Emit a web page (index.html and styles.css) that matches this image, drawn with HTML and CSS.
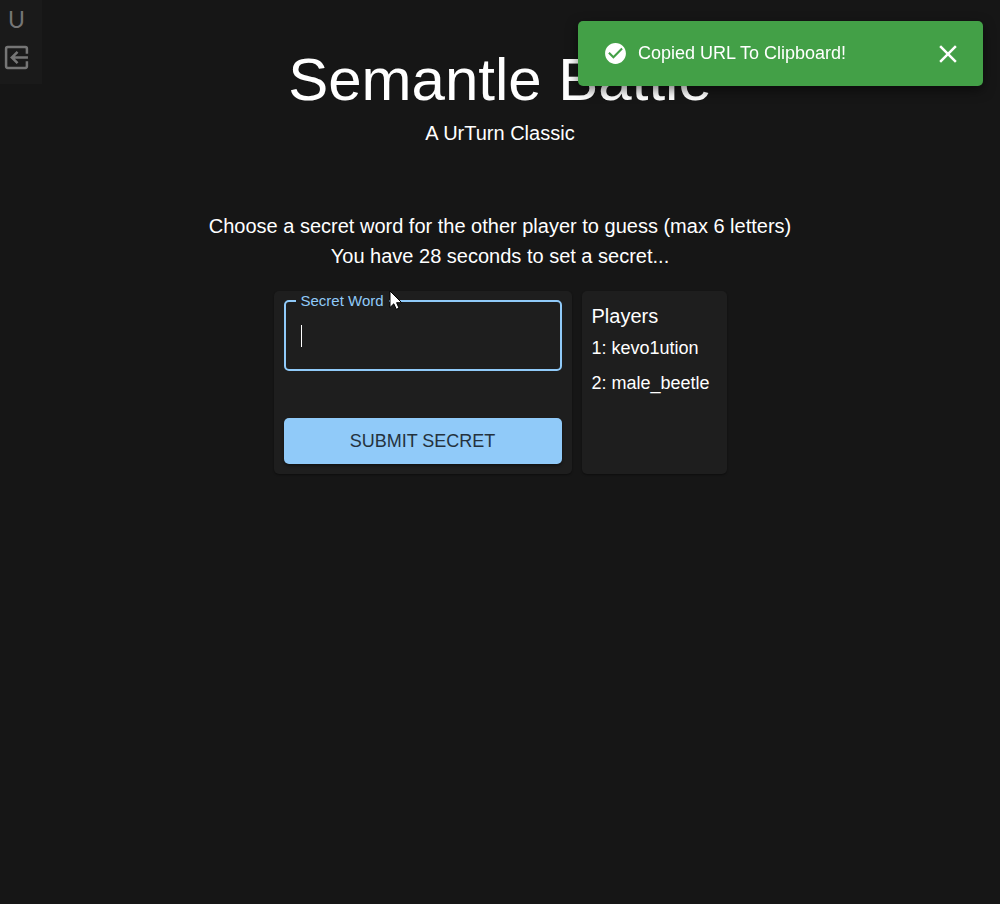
FILE: index.html
```html
<!DOCTYPE html>
<html lang="en">
<head>
<meta charset="utf-8">
<meta name="viewport" content="width=device-width, initial-scale=1">
<title>Semantle Battle</title>
<link rel="stylesheet" href="styles.css">
</head>
<body>
<nav class="rail" aria-label="Game">
  <a class="rail-logo" href="#" aria-label="UrTurn home">U</a>
  <button class="rail-button" type="button" aria-label="Leave match">
    <svg class="rail-icon" viewBox="0 0 24 24" fill="none" stroke="currentColor" stroke-width="2.400" stroke-linejoin="round">
      <path d="M22 8.500V3.500A1.500 1.500 0 0 0 20.500 2H3.500A1.500 1.500 0 0 0 2 3.500V20.500A1.500 1.500 0 0 0 3.500 22H20.500A1.500 1.500 0 0 0 22 20.500V15.500"/>
      <path d="M23 12H8M13 6.500L7.500 12L13 17.500" stroke-linejoin="miter"/>
    </svg>
  </button>
</nav>

<main class="game">
  <header class="heading">
    <h1 class="title">Semantle Battle</h1>
    <p class="subtitle">A UrTurn Classic</p>
  </header>
  <div class="status">
    <p class="status-line">Choose a secret word for the other player to guess (max 6 letters)</p>
    <p class="status-line">You have 28 seconds to set a secret...</p>
  </div>
  <div class="panels">
    <form class="card secret">
      <fieldset class="field">
        <legend class="field-legend"><label for="secret-word">Secret Word</label></legend>
        <input class="field-input" id="secret-word" type="text" maxlength="6" autocomplete="off">
        <span class="caret"></span>
        <svg class="pointer" viewBox="0 0 14 20" aria-hidden="true">
          <path d="M1 1V17.500L4.800 13.800L7.300 19.300L10 18.100L7.600 12.700H12.700Z" fill="#fff" stroke="#000" stroke-width="1"/>
        </svg>
      </fieldset>
      <button class="submit" type="button">SUBMIT SECRET</button>
    </form>
    <section class="card players">
      <h2 class="players-title">Players</h2>
      <ul class="players-list">
        <li class="player">1: kevo1ution</li>
        <li class="player">2: male_beetle</li>
      </ul>
    </section>
  </div>
</main>

<div class="toast" role="alert">
  <svg class="toast-icon" viewBox="0 0 24 24" fill="currentColor" aria-hidden="true">
    <path d="M12 2C6.480 2 2 6.480 2 12s4.480 10 10 10 10-4.480 10-10S17.520 2 12 2zm-2 15l-5-5 1.410-1.410L10 14.170l7.590-7.590L19 8l-9 9z"/>
  </svg>
  <span class="toast-text">Copied URL To Clipboard!</span>
  <button class="toast-close" type="button" aria-label="Close">
    <svg class="close-icon" viewBox="0 0 24 24" fill="currentColor">
      <path d="M19 6.410L17.590 5 12 10.590 6.410 5 5 6.410 10.590 12 5 17.590 6.410 19 12 13.410 17.590 19 19 17.590 13.410 12z"/>
    </svg>
  </button>
</div>
</body>
</html>
```

FILE: styles.css
```css
* {
  box-sizing: border-box;
}

body {
  margin: 0;
  min-height: 100vh;
  background: #161616;
  color: #fff;
  font-family: "Liberation Sans", Arial, sans-serif;
  font-size: 18px;
}

h1, h2, p, ul {
  margin: 0;
  padding: 0;
  font-weight: 400;
}

button {
  border: 0;
  padding: 0;
  background: none;
  color: inherit;
  font: inherit;
  cursor: pointer;
}

svg {
  display: block;
}

.rail {
  position: fixed;
  top: 0;
  left: 0;
  display: flex;
  flex-direction: column;
  gap: 10px;
  padding: 3px 13px 14px 4px;
  background: #1a1a1a;
  color: #757575;
}

.rail-logo {
  color: inherit;
  font-family: Lato, sans-serif;
  font-size: 23px;
  line-height: 32px;
  text-align: center;
  text-decoration: none;
}

.rail-icon {
  width: 25px;
  height: 25px;
}

.game {
  display: flex;
  flex-direction: column;
  align-items: center;
  padding: 45px 16px;
}

.heading,
.status {
  text-align: center;
}

.title {
  font-size: 60px;
  line-height: 70px;
}

.subtitle,
.status-line {
  font-size: 20px;
  line-height: 30px;
}

.subtitle {
  padding-top: 3px;
}

.status {
  padding-top: 63px;
}

.panels {
  display: flex;
  gap: 10px;
  padding-top: 20px;
}

.card {
  padding: 10px;
  border-radius: 5px;
  background: #1e1e1e;
  box-shadow: 0 1px 2px rgba(0, 0, 0, 0.4);
}

.secret {
  display: flex;
  flex-direction: column;
  gap: 47px;
  width: 298px;
  padding-top: 0;
}

.field {
  position: relative;
  margin: 0;
  padding: 0 15px 12px 10px;
  border: 2px solid #90caf9;
  border-radius: 5px;
}

.field-legend {
  padding: 0 5px;
  color: #90caf9;
  font-size: 15px;
  line-height: 20px;
}

.field-input {
  display: block;
  width: 100%;
  height: 46px;
  padding: 0 5px;
  border: 0;
  outline: 0;
  background: none;
  color: #fff;
  font: inherit;
}

.caret {
  position: absolute;
  left: 15px;
  top: 14px;
  width: 1px;
  height: 22px;
  background: #fff;
}

.pointer {
  position: absolute;
  left: 103px;
  top: -21px;
  width: 14px;
  height: 20px;
}

.submit {
  height: 46px;
  border-radius: 5px;
  background: #90caf9;
  color: #24323e;
  font-size: 18px;
  line-height: 30px;
  box-shadow: 0 2px 3px rgba(0, 0, 0, 0.4);
}

.players {
  min-width: 145px;
}

.players-title {
  font-size: 20px;
  line-height: 30px;
}

.players-list {
  padding-top: 2px;
  list-style: none;
}

.player {
  padding-bottom: 5px;
  font-size: 18px;
  line-height: 30px;
}

.toast {
  position: fixed;
  top: 21px;
  right: 17px;
  display: flex;
  align-items: center;
  gap: 10px;
  width: 405px;
  max-width: calc(100% - 34px);
  min-height: 65px;
  padding: 8px 20px 8px 25px;
  border-radius: 5px;
  background: #43a047;
  box-shadow: 0 4px 12px rgba(0, 0, 0, 0.5);
}

.toast-icon {
  width: 25px;
  height: 25px;
}

.toast-text {
  flex: 1;
}

.close-icon {
  width: 30px;
  height: 30px;
}
```
